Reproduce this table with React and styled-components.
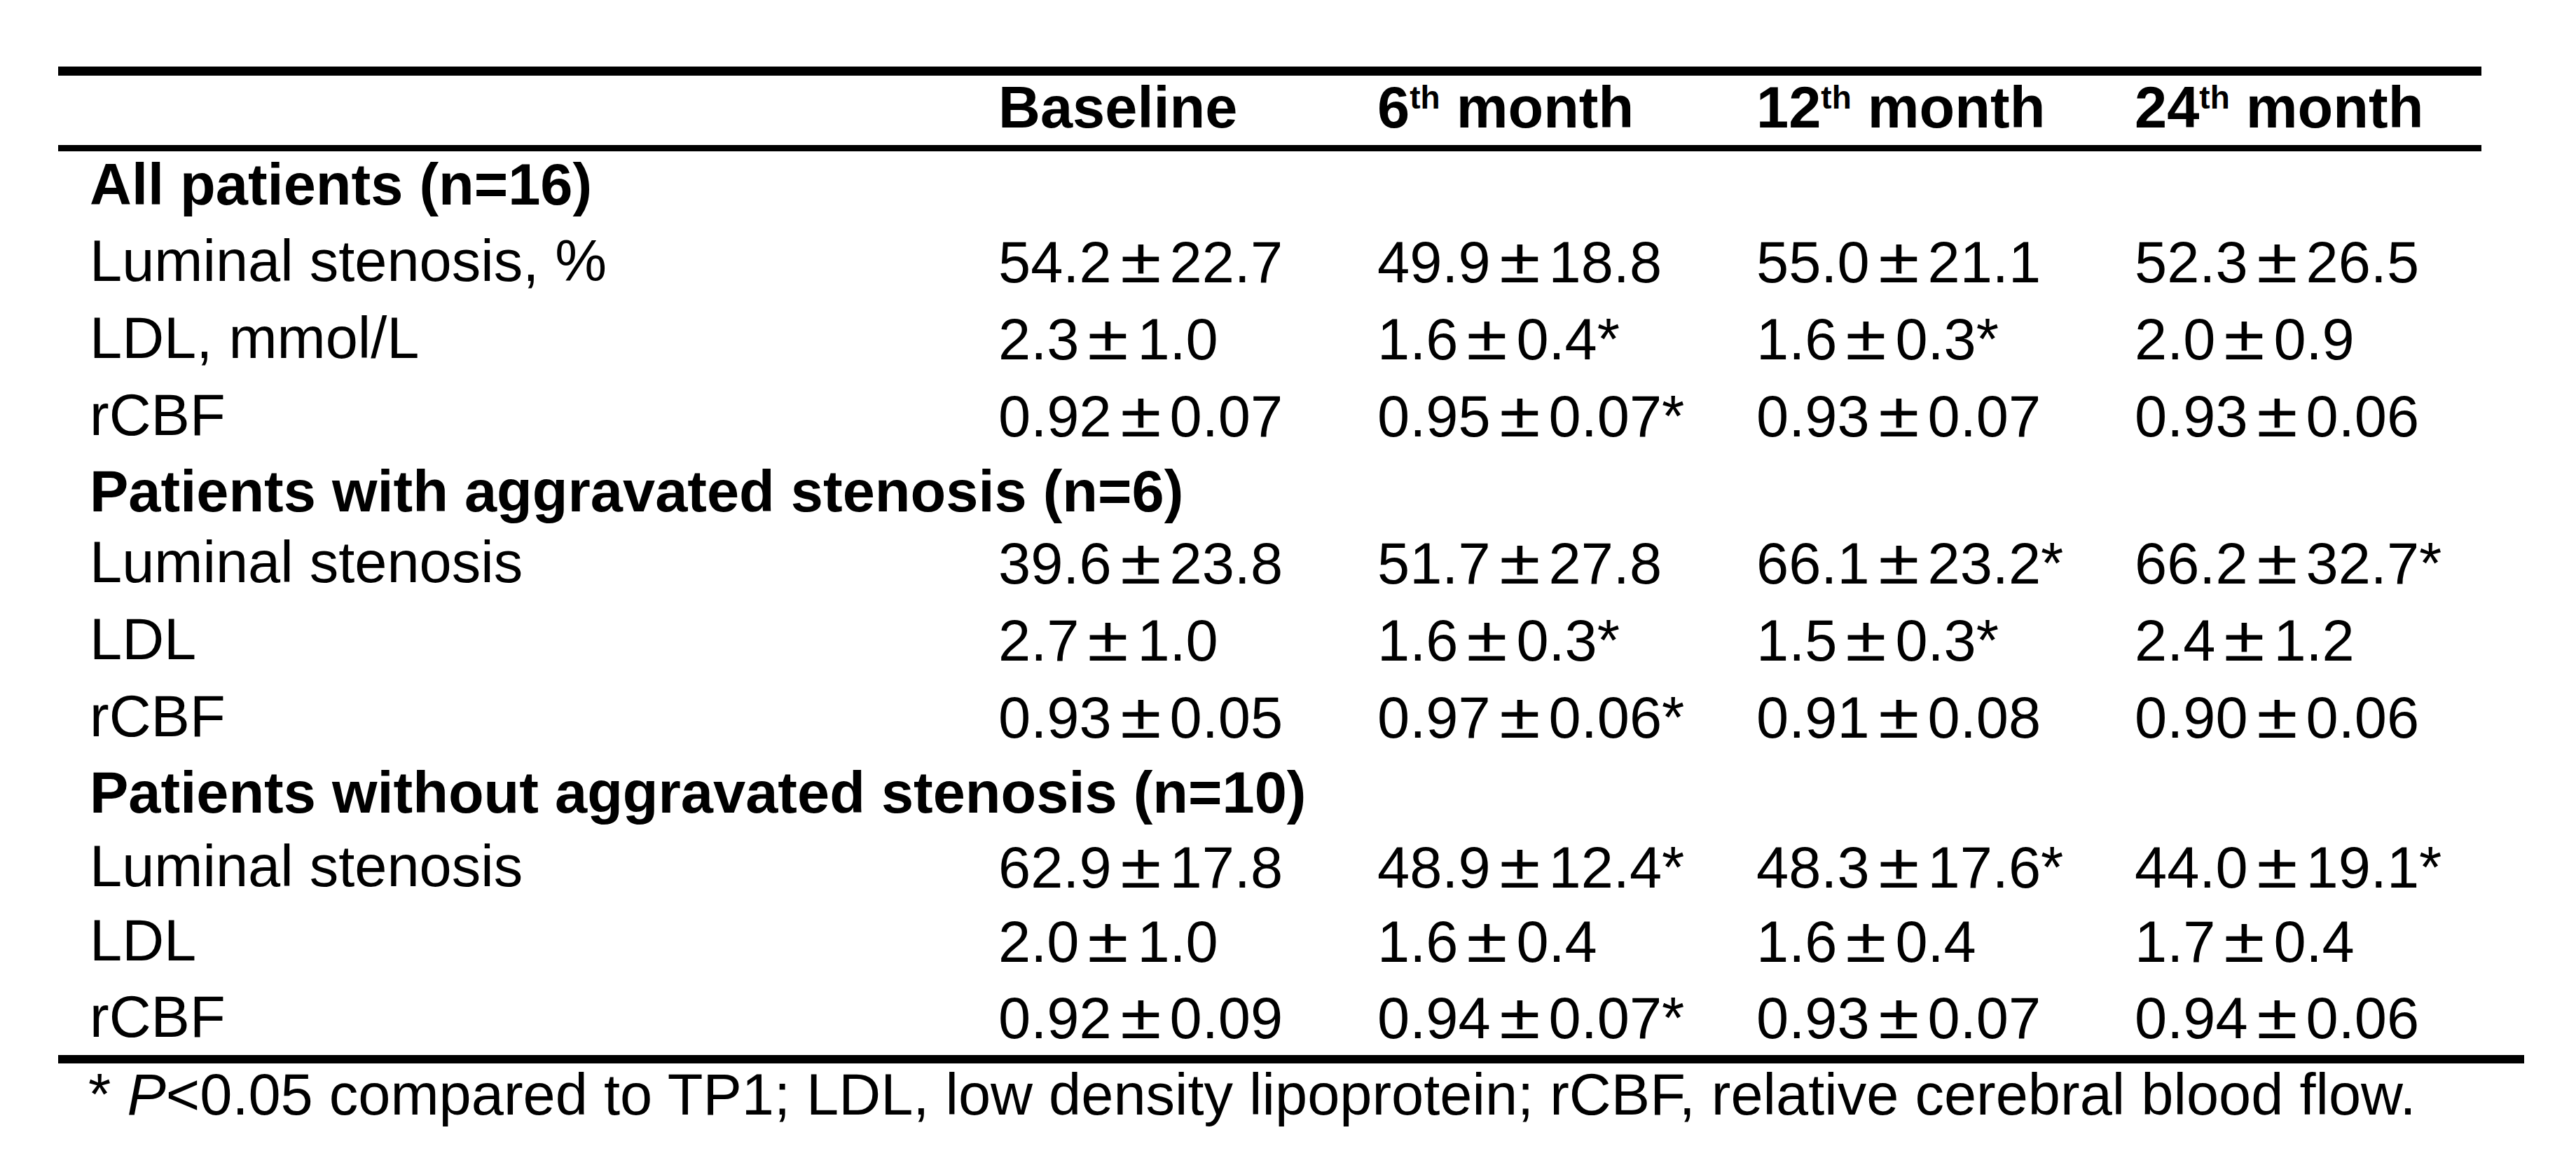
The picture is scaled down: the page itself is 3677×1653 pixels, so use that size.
import React from "react";
import styled, { createGlobalStyle } from "styled-components";

const GlobalStyle = createGlobalStyle`
  html, body {
    margin: 0;
    padding: 0;
    background: #ffffff;
  }
  body {
    font-family: "Liberation Sans", Arial, sans-serif;
    color: #000000;
  }
`;

const Page = styled.div`
  width: 3677px;
  height: 1653px;
  box-sizing: border-box;
  padding: 95px 0 0 83px;
  overflow: hidden;
`;

const Table = styled.div`
  width: 3459px;
`;

const Rule = styled.div`
  width: ${({ $width }) => ($width ? `${$width}px` : "100%")};
  height: ${({ $weight }) => $weight}px;
  background: #000000;
`;

const Row = styled.div`
  display: grid;
  grid-template-columns: 1297px 541px 541px 540px 1fr;
  box-sizing: border-box;
  height: ${({ $h }) => $h}px;
  padding-left: 45px;
  padding-top: ${({ $top }) => $top || 0}px;
  font-size: 83px;
  line-height: 83px;
  font-weight: ${({ $bold }) => ($bold ? 700 : 400)};
  white-space: nowrap;
`;

const Body = styled.div`
  padding-top: 6px;
`;

const Cell = styled.div`
  white-space: nowrap;
`;

const GroupTitle = styled.div`
  grid-column: 1 / -1;
`;

const Sup = styled.span`
  font-size: 46px;
  line-height: 0;
  vertical-align: 27px;
`;

const Pm = styled.span`
  display: inline-block;
  width: 83px;
  text-align: center;
  font-size: 90px;
  line-height: 83px;
  transform: scaleX(1.18);
`;

const Footnote = styled.div`
  margin-top: 3px;
  padding-left: 43px;
  font-size: 83px;
  line-height: 83px;
  white-space: nowrap;
`;

const groups = [
  {
    title: "All patients (n=16)",
    h: 109,
    rows: [
      { h: 110, cells: ["Luminal stenosis, %", "54.2±22.7", "49.9±18.8", "55.0±21.1", "52.3±26.5"] },
      { h: 110, cells: ["LDL, mmol/L", "2.3±1.0", "1.6±0.4*", "1.6±0.3*", "2.0±0.9"] },
      { h: 109, cells: ["rCBF", "0.92±0.07", "0.95±0.07*", "0.93±0.07", "0.93±0.06"] },
    ],
  },
  {
    title: "Patients with aggravated stenosis (n=6)",
    h: 101,
    rows: [
      { h: 110, cells: ["Luminal stenosis", "39.6±23.8", "51.7±27.8", "66.1±23.2*", "66.2±32.7*"] },
      { h: 110, cells: ["LDL", "2.7±1.0", "1.6±0.3*", "1.5±0.3*", "2.4±1.2"] },
      { h: 109, cells: ["rCBF", "0.93±0.05", "0.97±0.06*", "0.91±0.08", "0.90±0.06"] },
    ],
  },
  {
    title: "Patients without aggravated stenosis (n=10)",
    h: 105,
    rows: [
      { h: 106, cells: ["Luminal stenosis", "62.9±17.8", "48.9±12.4*", "48.3±17.6*", "44.0±19.1*"] },
      { h: 109, cells: ["LDL", "2.0±1.0", "1.6±0.4", "1.6±0.4", "1.7±0.4"] },
      { h: 96, cells: ["rCBF", "0.92±0.09", "0.94±0.07*", "0.93±0.07", "0.94±0.06"] },
    ],
  },
];

const Value = ({ text }) => {
  const [left, right] = text.split("±");
  if (right === undefined) return <Cell>{text}</Cell>;
  return (
    <Cell>
      {left}
      <Pm>±</Pm>
      {right}
    </Cell>
  );
};

const Month = ({ n }) => (
  <Cell>
    {n}
    <Sup>th</Sup> month
  </Cell>
);

const App = () => {
  return (
    <>
      <GlobalStyle />
      <Page>
        <Table>
          <Rule $weight={13} />
          <Row $bold $h={99} $top={4}>
            <Cell />
            <Cell>Baseline</Cell>
            <Month n="6" />
            <Month n="12" />
            <Month n="24" />
          </Row>
          <Rule $weight={9} />
          <Body>
            {groups.map((group) => (
              <React.Fragment key={group.title}>
                <Row $bold $h={group.h}>
                  <GroupTitle>{group.title}</GroupTitle>
                </Row>
                {group.rows.map((row, i) => (
                  <Row key={i} $h={row.h}>
                    <Cell>{row.cells[0]}</Cell>
                    {row.cells.slice(1).map((v, j) => (
                      <Value key={j} text={v} />
                    ))}
                  </Row>
                ))}
              </React.Fragment>
            ))}
          </Body>
        </Table>
        <Rule $weight={12} $width={3520} />
        <Footnote>
          * <i>P</i>&lt;0.05 compared to TP1; LDL, low density lipoprotein; rCBF,
          relative cerebral blood flow.
        </Footnote>
      </Page>
    </>
  );
};

export default App;
